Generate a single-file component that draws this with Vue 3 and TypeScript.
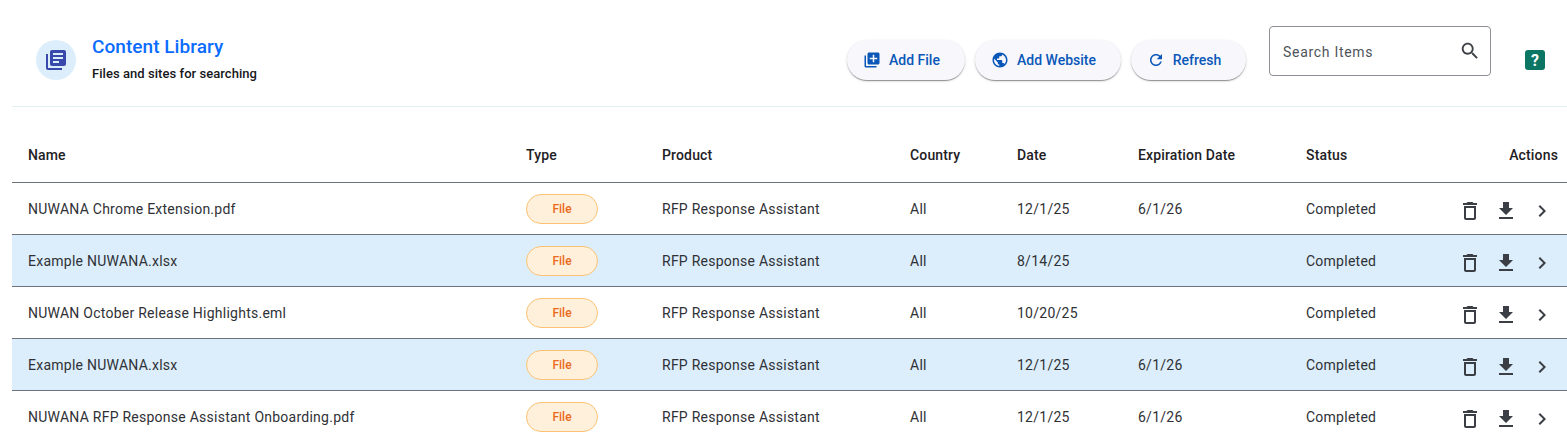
<script setup lang="ts">
interface Item {
  name: string
  date: string
  expires: string
}

const items: Item[] = [
  { name: 'NUWANA Chrome Extension.pdf', date: '12/1/25', expires: '6/1/26' },
  { name: 'Example NUWANA.xlsx', date: '8/14/25', expires: '' },
  { name: 'NUWAN October Release Highlights.eml', date: '10/20/25', expires: '' },
  { name: 'Example NUWANA.xlsx', date: '12/1/25', expires: '6/1/26' },
  { name: 'NUWANA RFP Response Assistant Onboarding.pdf', date: '12/1/25', expires: '6/1/26' }
]
</script>

<template>
  <div class="page">
    <header class="top-bar">
      <div class="title-block">
        <span class="title-icon">
          <svg viewBox="0 0 24 24" width="24" height="24">
            <path d="M4 6H2v14c0 1.1.9 2 2 2h14v-2H4V6zm16-4H8c-1.1 0-2 .9-2 2v12c0 1.1.9 2 2 2h12c1.1 0 2-.9 2-2V4c0-1.1-.9-2-2-2zm-1 9H9V9h10v2zm-4 4H9v-2h6v2zm4-8H9V5h10v2z" />
          </svg>
        </span>
        <div class="title-text">
          <h1>Content Library</h1>
          <p>Files and sites for searching</p>
        </div>
      </div>
      <div class="buttons">
        <button class="pill add-file">
          <svg viewBox="0 0 24 24" width="18" height="18">
            <path d="M4 6H2v14c0 1.1.9 2 2 2h14v-2H4V6zm16-4H8c-1.1 0-2 .9-2 2v12c0 1.1.9 2 2 2h12c1.1 0 2-.9 2-2V4c0-1.1-.9-2-2-2zm-1 9h-4v4h-2v-4H9V9h4V5h2v4h4v2z" />
          </svg>
          Add File
        </button>
        <button class="pill add-site">
          <svg viewBox="0 0 24 24" width="18" height="18">
            <path d="M12 2C6.48 2 2 6.48 2 12s4.48 10 10 10 10-4.48 10-10S17.52 2 12 2zm-1 17.93c-3.95-.49-7-3.85-7-7.93 0-.62.08-1.21.21-1.79L9 15v1c0 1.1.9 2 2 2v1.93zm6.9-2.54c-.26-.81-1-1.39-1.9-1.39h-1v-3c0-.55-.45-1-1-1H8v-2h2c.55 0 1-.45 1-1V7h2c1.1 0 2-.9 2-2v-.41c2.93 1.19 5 4.06 5 7.41 0 2.08-.8 3.97-2.1 5.39z" />
          </svg>
          Add Website
        </button>
        <button class="pill refresh">
          <svg viewBox="0 0 24 24" width="18" height="18">
            <path d="M17.65 6.35C16.2 4.9 14.21 4 12 4c-4.42 0-7.99 3.58-7.99 8s3.57 8 7.99 8c3.73 0 6.84-2.55 7.73-6h-2.08c-.82 2.33-3.04 4-5.65 4-3.31 0-6-2.69-6-6s2.69-6 6-6c1.66 0 3.14.69 4.22 1.78L13 11h7V4l-2.35 2.35z" />
          </svg>
          Refresh
        </button>
      </div>
      <div class="search">
        <span>Search Items</span>
        <svg viewBox="0 0 24 24" width="22" height="22">
          <path d="M15.5 14h-.79l-.28-.27C15.41 12.59 16 11.11 16 9.5 16 5.91 13.09 3 9.5 3S3 5.91 3 9.5 5.91 16 9.5 16c1.61 0 3.09-.59 4.23-1.57l.27.28v.79l5 4.99L20.49 19l-4.99-5zm-6 0C7.01 14 5 11.99 5 9.5S7.01 5 9.5 5 14 7.01 14 9.5 11.99 14 9.5 14z" />
        </svg>
      </div>
      <span class="help">?</span>
    </header>

    <table class="library">
      <colgroup>
        <col class="c-name" />
        <col class="c-type" />
        <col class="c-product" />
        <col class="c-country" />
        <col class="c-date" />
        <col class="c-expiry" />
        <col class="c-status" />
        <col />
      </colgroup>
      <thead>
        <tr>
          <th>Name</th>
          <th>Type</th>
          <th>Product</th>
          <th>Country</th>
          <th>Date</th>
          <th>Expiration Date</th>
          <th>Status</th>
          <th class="actions-head">Actions</th>
        </tr>
      </thead>
      <tbody>
        <tr v-for="(item, i) in items" :key="i">
          <td>{{ item.name }}</td>
          <td><span class="type-chip">File</span></td>
          <td>RFP Response Assistant</td>
          <td>All</td>
          <td>{{ item.date }}</td>
          <td>{{ item.expires }}</td>
          <td>Completed</td>
          <td>
            <div class="actions">
              <svg viewBox="0 0 24 24" width="24" height="24">
                <path d="M6 19c0 1.1.9 2 2 2h8c1.1 0 2-.9 2-2V7H6v12zM8 9h8v10H8V9zm7.5-5l-1-1h-5l-1 1H5v2h14V4h-3.5z" />
              </svg>
              <svg viewBox="0 0 24 24" width="24" height="24">
                <path d="M19 9h-4V3H9v6H5l7 7 7-7zM5 18v2h14v-2H5z" />
              </svg>
              <svg viewBox="0 0 24 24" width="24" height="24">
                <path d="M10 6L8.59 7.41 13.17 12l-4.58 4.59L10 18l6-6z" />
              </svg>
            </div>
          </td>
        </tr>
      </tbody>
    </table>
  </div>
</template>

<style scoped>
.page {
  width: 1567px;
  height: 441px;
  overflow: hidden;
  background: #fff;
  font-family: Roboto, "Noto Sans", sans-serif;
  color: #1f2125;
}

/* header */
.top-bar {
  display: flex;
  align-items: flex-start;
  height: 107px;
  margin-left: 12px;
  box-sizing: border-box;
  border-bottom: 1px solid #e1eff4;
}

.title-block {
  display: flex;
  align-items: flex-start;
  gap: 16px;
  margin: 40px 0 0 24px;
  width: 811px;
}

.title-icon {
  display: flex;
  align-items: center;
  justify-content: center;
  width: 40px;
  height: 40px;
  border-radius: 50%;
  background: #dceefb;
}

.title-icon svg {
  fill: #3949ab;
}

.title-text h1 {
  margin: -4px 0 0;
  font-size: 19px;
  line-height: 22px;
  font-weight: 500;
  letter-spacing: 0.05px;
  color: #0a6cff;
}

.title-text p {
  margin: 8px 0 0;
  font-size: 13px;
  line-height: 16px;
  font-weight: 500;
  letter-spacing: 0.05px;
  color: #15171a;
}

.buttons {
  display: flex;
  gap: 10px;
  margin-top: 40px;
}

.pill {
  display: flex;
  align-items: center;
  justify-content: center;
  gap: 8px;
  height: 40px;
  padding: 0 9px 0 0;
  border: none;
  border-radius: 20px;
  background: #f7f7fc;
  box-shadow: 0 2px 1px -1px rgba(0, 0, 0, 0.25), 0 1px 1px rgba(0, 0, 0, 0.16), 0 1px 3px rgba(0, 0, 0, 0.14);
  font-family: inherit;
  font-size: 14px;
  font-weight: 500;
  color: #0b57b8;
}

.pill svg {
  fill: #0b57b8;
}

.add-file {
  width: 118px;
}

.add-site {
  width: 146px;
}

.refresh {
  width: 115px;
}

.search {
  display: flex;
  align-items: center;
  justify-content: space-between;
  box-sizing: border-box;
  width: 222px;
  height: 50px;
  margin: 26px 0 0 23px;
  padding: 0 9px 0 13px;
  border: 1px solid #8c8f96;
  border-radius: 4px;
  font-size: 14px;
  letter-spacing: 0.7px;
  color: #50535a;
}

.search span {
  padding-top: 2px;
}

.search svg {
  fill: #3c3f45;
}

.help {
  display: flex;
  align-items: center;
  justify-content: center;
  width: 20px;
  height: 20px;
  margin: 50px 0 0 34px;
  border-radius: 3px;
  background: #0b7663;
  color: #fff;
  font-size: 16px;
  font-weight: 700;
}

/* table */
.library {
  width: 1555px;
  margin: 21px 0 0 12px;
  border-collapse: collapse;
  table-layout: fixed;
  font-size: 14px;
}

.c-name {
  width: 498px;
}

.c-type {
  width: 136px;
}

.c-product {
  width: 248px;
}

.c-country {
  width: 107px;
}

.c-date {
  width: 121px;
}

.c-expiry {
  width: 168px;
}

.c-status {
  width: 120px;
}

th {
  height: 54px;
  padding: 1px 0 0 16px;
  box-sizing: border-box;
  text-align: left;
  font-weight: 500;
  letter-spacing: 0.15px;
  color: #1f2125;
  border-bottom: 1px solid #6d7178;
}

th.actions-head {
  padding: 1px 9px 0 0;
  text-align: right;
}

td {
  height: 52px;
  padding: 2px 0 0 16px;
  box-sizing: border-box;
  letter-spacing: 0.25px;
  font-weight: 400;
  color: #2f3136;
  white-space: nowrap;
  border-bottom: 1px solid #6d7178;
}

tbody tr:nth-child(even) td {
  background: #dceefb;
}

.type-chip {
  display: flex;
  align-items: center;
  justify-content: center;
  box-sizing: border-box;
  width: 72px;
  height: 30px;
  border: 1px solid #fbc274;
  border-radius: 15px;
  background: #fff0dc;
  color: #ea6a1a;
  font-size: 12px;
  font-weight: 500;
  letter-spacing: 0;
}

.actions {
  display: flex;
  justify-content: flex-end;
  gap: 12px;
  margin: 3px 13px 0 0;
}

.actions svg {
  fill: #3b3e45;
}
</style>
